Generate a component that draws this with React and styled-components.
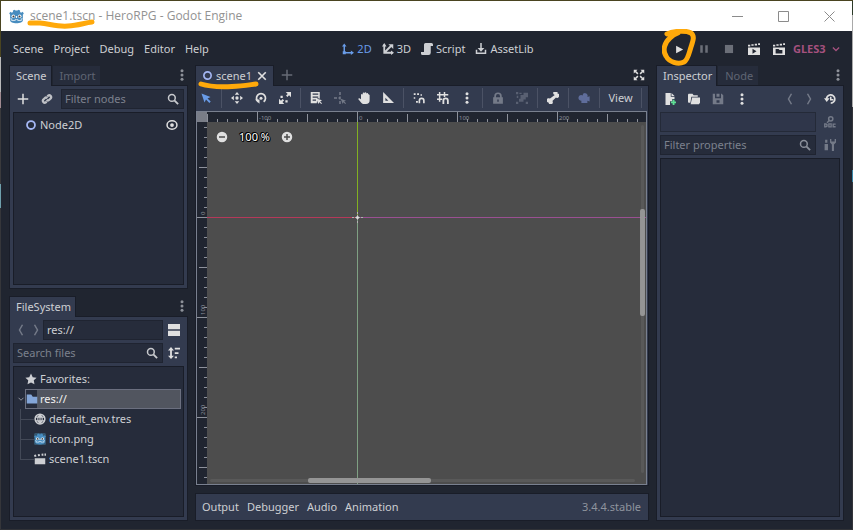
import React, { useEffect, useRef, useState } from "react";
import styled, { createGlobalStyle, css } from "styled-components";

const c = {
  base: "#202530",
  panel: "#333b4f",
  well: "#262c3b",
  edge: "#191d28",
  text: "#cdcfd3",
  dim: "#7d8290",
  faint: "#5f6573",
  icon: "#e0e0e0",
  accent: "#699ce8",
  mark: "#ffa90a",
};

const Global = createGlobalStyle`
  *, *::before, *::after { box-sizing: border-box; }
  body { margin: 0; }
  body, button, input, select {
    font-family: "Noto Sans", "Open Sans", sans-serif;
    font-size: 11px;
    line-height: 16px;
    color: ${c.text};
  }
  button { background: none; border: 0; padding: 0; cursor: pointer; white-space: nowrap; }
  ul { list-style: none; margin: 0; padding: 0; }
  svg { display: block; flex: none; }
`;

const Desktop = styled.div`
  height: 100vh;
  min-height: 400px;
  padding: 1px;
  display: flex;
  background:
    linear-gradient(#4a4420, #4a4420) top / 100% 1px no-repeat,
    linear-gradient(#303237, #303237) bottom / 100% 1px no-repeat,
    linear-gradient(#4a4420 0 57px, #b9b9b9 57px 92px, #a08a90 92px 108px, #3a3a3c 108px 184px, #6fa0ac 184px 208px, #35363a 208px) left / 1px 100% no-repeat,
    linear-gradient(#2c3a28 0 15px, #a9a9a9 15px 107px, #33343a 107px 170px, #3a87a8 170px 182px, #33343a 182px) right / 1px 100% no-repeat;
`;

const Window = styled.div`
  flex: 1;
  min-width: 0;
  display: flex;
  flex-direction: column;
  background: ${c.base};
`;

const TitleBar = styled.header`
  height: 30px;
  flex: none;
  display: flex;
  align-items: center;
  background: #fff;
  padding-left: 8px;
`;
const TitleText = styled.h1`
  position: relative;
  margin: 0 auto 0 6px;
  font-family: "Open Sans", "Noto Sans", sans-serif;
  font-size: 12px;
  font-weight: 400;
  line-height: 16px;
  color: #929292;
  white-space: nowrap;
`;
const CaptionButton = styled.button`
  width: 46px;
  height: 30px;
  display: grid;
  place-items: center;
  color: #8b8b8b;
`;

const Mark = styled.svg`
  position: absolute;
  left: ${(p) => p.$x}px;
  top: ${(p) => p.$y}px;
  z-index: 5;
  fill: none;
  stroke: ${c.mark};
  stroke-width: 5;
  stroke-linecap: round;
  stroke-linejoin: round;
  pointer-events: none;
`;

const MenuBar = styled.nav`
  height: 34px;
  flex: none;
  display: flex;
  justify-content: space-between;
  align-items: center;
  padding: 2px 8px 0 12px;
`;
const Cluster = styled.div`
  display: flex;
  align-items: center;
  gap: ${(p) => p.$gap}px;
`;
const MenuButton = styled.button`
  display: flex;
  align-items: center;
  gap: 3px;
  color: ${(p) => (p.$active ? c.accent : c.text)};
`;
const RunButton = styled.button`
  position: relative;
  width: 24px;
  height: 24px;
  display: grid;
  place-items: center;
  color: ${(p) => (p.$off ? "#6b6f78" : c.icon)};
`;
const DriverField = styled.label`
  display: flex;
  align-items: center;
  gap: 5px;
  color: #a5517e;
  padding: 0 3px 0 1px;
`;
const DriverSelect = styled.select`
  appearance: none;
  border: 0;
  padding: 0;
  background: none;
  color: inherit;
  font-weight: 700;
`;

const Workspace = styled.main`
  flex: 1;
  min-height: 0;
  display: grid;
  grid-template-columns: 179px minmax(0, 1fr) 188px;
  gap: 7px;
  padding: 0 8px 8px;
`;
const LeftColumn = styled.div`
  display: grid;
  grid-template-rows: minmax(0, 224fr) minmax(0, 225fr);
  gap: 7px;
  min-height: 0;
`;
const Dock = styled.section`
  display: flex;
  flex-direction: column;
  min-height: 0;
  min-width: 0;
`;
const TabStrip = styled.div`
  height: 20px;
  flex: none;
  display: flex;
  align-items: flex-start;
  gap: 1px;
`;
const Tab = styled.button`
  position: relative;
  display: flex;
  align-items: center;
  gap: 3px;
  padding: 0 5px 0 7px;
  height: 20px;
  ${(p) =>
    p.$active
      ? css`
          height: 21px;
          z-index: 1;
          background: ${c.panel};
          box-shadow: inset 1px 1px 0 ${c.edge}, inset -1px 0 0 ${c.edge};
        `
      : css`
          height: 19px;
          margin-top: 1px;
          background: ${c.well};
          color: ${c.faint};
        `}
`;
const StripEnd = styled.button`
  margin-left: auto;
  margin-right: ${(p) => (p.$bright ? 4 : 0)}px;
  width: 12px;
  height: 20px;
  display: grid;
  place-items: center;
  color: ${(p) => (p.$bright ? c.icon : "#8d9199")};
`;
const StripAdd = styled(StripEnd)`
  margin-left: 6px;
  color: #666b75;
`;
const DockBody = styled.div`
  flex: 1;
  min-height: 0;
  display: flex;
  flex-direction: column;
  gap: 3px;
  padding: 4px;
  background: ${c.panel};
  box-shadow: inset 0 0 0 1px ${c.edge};
`;
const Row = styled.div`
  display: flex;
  align-items: center;
  height: 20px;
  flex: none;
  gap: ${(p) => p.$gap ?? 4}px;
`;
const IconButton = styled.button`
  width: ${(p) => p.$w ?? 20}px;
  height: 20px;
  display: grid;
  place-items: center;
  color: ${(p) => p.$color ?? (p.$off ? "#747a88" : c.icon)};
  ${(p) => p.$push && "margin-left: auto;"}
`;
const Field = styled.label`
  flex: 1;
  min-width: 0;
  height: 20px;
  display: flex;
  align-items: center;
  padding: 0 4px 0 3px;
  background: ${(p) => (p.$blank ? "#2f364a" : c.well)};
  border: 1px solid ${(p) => (p.$blank ? "#242a38" : "#1f2431")};
  color: ${(p) => (p.$soft ? "#8a8f9a" : "#c8cace")};
`;
const FieldInput = styled.input`
  flex: 1;
  min-width: 0;
  border: 0;
  outline: 0;
  padding: 0;
  background: transparent;
  &::placeholder { color: #7c818d; opacity: 1; }
`;
const Well = styled.ul`
  flex: 1;
  min-height: 0;
  overflow: hidden;
  && { padding: 2px; }
  background: ${c.well};
  border: 1px solid ${c.edge};
`;
const TreeItem = styled.li`
  display: flex;
  align-items: center;
  height: 20px;
  padding-left: ${(p) => p.$indent}px;
`;
const TreeLabel = styled.div`
  flex: 1;
  min-width: 0;
  height: 20px;
  display: flex;
  align-items: center;
  gap: 3px;
  ${(p) =>
    p.$selected &&
    css`
      background: linear-gradient(${c.well}, ${c.well}) left / 11px 100% no-repeat, #51555f;
      border: 1px solid #6b6f7f;
      gap: 2px;
      color: #f0f0f0;
    `}
`;
const Branch = styled.span`
  width: 14px;
  height: 20px;
  background:
    linear-gradient(#434957, #434957) left top / 1px ${(p) => (p.$last ? "50%" : "100%")} no-repeat,
    linear-gradient(#434957, #434957) left center / 100% 1px no-repeat;
`;
const Fold = styled.button`
  width: 9px;
  height: 20px;
  display: grid;
  place-items: center;
  color: #8d919b;
`;

const Centre = styled.div`
  display: flex;
  flex-direction: column;
  min-width: 0;
  min-height: 0;
`;
const EditorPanel = styled.div`
  flex: 1;
  min-height: 0;
  display: flex;
  flex-direction: column;
  background: ${c.panel};
  box-shadow: inset 0 0 0 1px ${c.edge};
  padding: 1px 2px 1px 0;
`;
const Tools = styled.div`
  display: flex;
  align-items: center;
  gap: 2px;
  height: 25px;
  padding-bottom: 1px;
  flex: none;
`;
const Divider = styled.span`
  width: 5px;
  height: 20px;
  background: linear-gradient(#4b5265, #4b5265) center / 1px 100% no-repeat;
`;
const ViewButton = styled.button`
  width: 33px;
  height: 20px;
`;
const Viewport = styled.div`
  flex: 1;
  min-height: 0;
  margin-left: 1px;
  display: grid;
  grid-template: 10px minmax(0, 1fr) / 10px minmax(0, 1fr);
  border: 1px solid #79808f;
  background: ${c.base};
`;
const Corner = styled.div`
  background: #797d87;
`;
const RulerSvg = styled.svg`
  width: 100%;
  height: 100%;
  overflow: hidden;
  text { font-size: 6px; fill: #8d919b; }
  path { stroke: #8d919b; fill: none; }
`;
const Canvas = styled.div`
  position: relative;
  overflow: hidden;
  background: #4d4d4d;
`;
const Axes = styled.svg`
  position: absolute;
  inset: 0;
  width: 100%;
  height: 100%;
`;
const ZoomBar = styled.div`
  position: relative;
  display: flex;
  align-items: center;
  gap: 2px;
  padding: 5px;
`;
const ZoomValue = styled.button`
  width: 41px;
  color: #fff;
  text-shadow: 1px 0 #000, -1px 0 #000, 0 1px #000, 0 -1px #000, 1px 1px #000, -1px -1px #000;
`;
const ScrollH = styled.div`
  position: absolute;
  left: 3px;
  right: 11px;
  bottom: 2px;
  height: 3px;
  border-radius: 2px;
  background: #595959;
`;
const ScrollV = styled.div`
  position: absolute;
  top: 3px;
  bottom: 11px;
  right: 2px;
  width: 3px;
  border-radius: 2px;
  background: #595959;
`;
const ThumbH = styled.div`
  position: absolute;
  top: -1px;
  left: 23%;
  width: 29%;
  height: 5px;
  border-radius: 2px;
  background: #959595;
`;
const ThumbV = styled.div`
  position: absolute;
  left: -1px;
  top: 24%;
  height: 31%;
  width: 5px;
  border-radius: 2px;
  background: rgba(160, 160, 160, 0.85);
`;
const BottomBar = styled.footer`
  height: 28px;
  flex: none;
  margin-top: 7px;
  display: flex;
  align-items: center;
  gap: 8px;
  padding: 0 8px 0 7px;
  background: ${c.panel};
  box-shadow: inset 0 0 0 1px ${c.edge};
`;
const Version = styled.span`
  margin-left: auto;
  color: #8f949e;
`;

/* Icons share a 16-unit grid and take their colour from the control. */
const Icon = ({ size = 12, children }) => (
  <svg width={size} height={size} viewBox="0 0 16 16" fill="currentColor" aria-hidden="true">
    {children}
  </svg>
);
const line = { fill: "none", stroke: "currentColor", strokeWidth: 2 };

const art = {
  dots: <><circle cx="8" cy="2.4" r="2" /><circle cx="8" cy="8" r="2" /><circle cx="8" cy="13.6" r="2" /></>,
  plus: <path {...line} d="M8 1v14M1 8h14" />,
  close: <path {...line} strokeWidth="2.6" d="M2 2l12 12M14 2L2 14" />,
  link: <><path {...line} strokeWidth="3" d="M8.500 4.500l1-1a2.600 2.600 0 0 1 3.600 3.600l-2 2a2.600 2.600 0 0 1-3.600 0M7.500 11.500l-1 1a2.600 2.600 0 0 1-3.600-3.600l2-2a2.600 2.600 0 0 1 3.600 0" /></>,
  search: <><circle {...line} cx="6.500" cy="6.500" r="4.500" /><path {...line} strokeWidth="2.400" d="M9.800 9.800l5 5" /></>,
  node: <circle {...line} strokeWidth="2.400" cx="8" cy="8" r="5.300" />,
  eye: <><ellipse {...line} cx="8" cy="8" rx="6.600" ry="5.600" /><circle cx="8" cy="8" r="2.500" /></>,
  left: <path {...line} d="M10 1L6 8l4 7" />,
  right: <path {...line} d="M6 1l4 7-4 7" />,
  down: <path {...line} d="M3 5.500l5 5 5-5" />,
  split: <path d="M0 0h16v7H0zM0 9h16v7H0z" />,
  sort: <><path d="M4 0l4 4.500H5.200v7H8L4 16l-4-4.500h2.800v-7H0z" /><path d="M9 1h7v2.200H9zM9 7h5v2.200H9zM9 12.800h3V15H9z" /></>,
  star: <path d="M8 .8l2.300 4.700 5.200.7-3.800 3.600.9 5.200L8 12.500 3.400 15l.9-5.200L.5 6.200l5.200-.7z" />,
  folder: <path d="M1 2h6l2 3h6v9H1z" />,
  globe: <><circle {...line} cx="8" cy="8" r="6.500" /><path {...line} strokeWidth="1.500" d="M2 5.500h12M2 10.500h12M8 2v12M8 2C4 5 4 11 8 14M8 2c4 3 4 9 0 12" /></>,
  clapper: <path d="M1 7h14v8H1zM0 2.500l2.500-.6.8 2.700L.8 5.200zM5 1.700l2.500-.4.500 2.700-2.500.4zM10 1l2.400-.2.200 2.700-2.400.2zM14 .8h2v3h-2z" />,
  play: <path d="M2 1.500l12.500 6.500L2 14.500z" />,
  pause: <path d="M2 2h4v12H2zM10 2h4v12h-4z" />,
  stop: <path d="M1.500 1.500h13v13h-13z" />,
  playScene: <><path fillRule="evenodd" d="M0 6h16v10H0zM6 7.800v6.400l5.300-3.200z" /><path d="M0 2.200h3v2.300H0zM4.500 1.500h3v2.300h-3zM9 .9h3v2.300H9zM13.500.4H16v2.300h-2.500z" /></>,
  playCustom: <><path fillRule="evenodd" d="M0 6h16v10H0zM3.500 8v6h9V9.200H8.700L7.500 8z" /><path d="M0 2.200h3v2.300H0zM4.500 1.500h3v2.300h-3zM9 .9h3v2.300H9zM13.500.4H16v2.300h-2.500z" /></>,
  two: <><path {...line} d="M3 3v8.500a1.500 1.500 0 0 0 1.500 1.500H13" /><path d="M0 4.500L3 .5l3 4zM11.800 10l4.200 3-4.200 3zM1 11h4v4H1z" /></>,
  three: <><path {...line} strokeWidth="2.400" d="M3 2v11h11M3 13L12 4" /><path d="M0 4.500L3 0l3 4.500zM12 10l4 3-4 3zM8.500 1.500H15V8z" /></>,
  script: <path d="M6 0h8a2 2 0 0 1 2 2v2h-3v9a3 3 0 0 1-3 3H2a2 2 0 0 1-2-2v-2h4V2a2 2 0 0 1 2-2z" />,
  asset: <><path {...line} d="M2 9v4.500h12V9M8 0v8" /><path d="M3.500 6.500h9L8 11.500z" /></>,
  expand: <><path {...line} d="M3 3l3.500 3.500M13 3L9.500 6.500M3 13l3.500-3.500M13 13L9.500 9.500" /><path d="M1 1h5L1 6zM15 1v5l-5-5zM1 15v-5l5 5zM15 15h-5l5-5z" /></>,
  select: <path d="M2 2l4 12 2-4 4.500 4.500 1.800-1.800L10 8.500l4-2z" />,
  move: <><path d="M8 0l3 3.800H5zM8 16l3-3.800H5zM0 8l3.800-3v6zM16 8l-3.800-3v6z" /><circle cx="8" cy="8" r="2.200" /></>,
  rotate: <><path {...line} strokeWidth="2.300" d="M4.500 13A6 6 0 1 1 11.500 13" /><path d="M0 10h6v5.500z" /><circle cx="8" cy="8.400" r="2" /></>,
  scale: <><path d="M9 0h7v7l-2.600-2.600-2.200 2.200-1.800-1.800 2.200-2.200zM5 9.400L6.800 11.200 4.600 13.400 7 16H0V9l2.600 2.600z" /><path d="M2 5h3v3H2zM8.500 11h3v3h-3z" /></>,
  list: <><path fillRule="evenodd" d="M1 0h12v9l-3-1-1 7H1zM3.500 2v1.500H11V2zM3.500 6v1.500H11V6zM3.500 10v1.500H8V10z" /><path d="M8.500 8.500L16 11l-2.500 1.500L16 15l-1 1-2.500-2.500L11 16z" /></>,
  pivot: <><path {...line} strokeDasharray="4 2" d="M8 0v16M0 8h8" /><path d="M9 9l7 2.500-2.500 1.200L16 15l-1 1-2.500-2.500L11.500 16z" /></>,
  pan: <path d="M4 3.500a1.200 1.200 0 0 1 2.300 0V2a1.200 1.200 0 0 1 2.400 0v-.5a1.200 1.200 0 0 1 2.500 0V2.500a1.200 1.200 0 0 1 2.400 0L15.500 4v7a5 5 0 0 1-5 5H8c-2 0-3.200-1-4.200-2.500L.5 9.800c-.6-1 .8-2 2-1.200L4 9.800z" />,
  ruler: <path fillRule="evenodd" d="M1.500 0L16 14.500H1.500zM4.500 7.500v4h4z" />,
  snap: <><path {...line} strokeWidth="2.200" d="M8.500 15v-3.500a3 3 0 0 1 6 0V15" /><path d="M1 1.500h2.500V4H1zM5.500 1.500H8V4H5.500zM10 3h2v2h-2zM1 7h2v2H1zM4 12h2.500v2.200H4z" /></>,
  grid: <><path {...line} d="M3.500 0v13M10 0v6.500M0 3.500h15M0 9.500h7" /><path {...line} strokeWidth="2.400" d="M8.500 16v-4.500a3 3 0 0 1 6 0V16" /></>,
  lock: <path fillRule="evenodd" d="M3 7V5.500a5 5 0 0 1 10 0V7h1.500v8.500h-13V7zM5.300 7h5.400V5.500a2.700 2.700 0 0 0-5.400 0zM7 10v3h2v-3z" />,
  group: <path fillRule="evenodd" d="M0 0h3v3H0zM4.500 1h3v1.800h-3zM6 4h4V1h6v6h-3v3h-3v3H4V9h2zM13 13h3v3h-3zM0 13h3v3H0zM1 5h2v3H1z" />,
  bone: <path d="M10.300 4A2.900 2.900 0 1 1 14 1.900 2.900 2.900 0 1 1 12 7.200L7.200 12A2.900 2.900 0 1 1 2 14 2.900 2.900 0 1 1 4 8.800z" />,
  camera: <path d="M9.500 1.500a3.500 3.500 0 0 1 3 5l3-1v7l-3-1v3h-8v-3A3.700 3.700 0 1 1 6 4.500a3.500 3.500 0 0 1 3.500-3z" />,
  newRes: <><path d="M2 0h7v5h5v3h-3v3H8v5H2z" /><path d="M10 0l4 4h-4z" /><path fill="#5fdf94" d="M11.500 9H14v2.300h2.300v2.500H14V16h-2.500v-2.200H9.200v-2.500h2.300z" /></>,
  open: <path d="M0 2.500C0 1.600.7 1 1.500 1H6l1.500 2H13v2H4.500L3.200 13H1.500C.7 13 0 12.400 0 11.500zM5.500 6H16v7l-1.500 2h-11z" />,
  save: <path fillRule="evenodd" d="M1 1h3v6h8V1h1l2 2v12H1zM6 9.500V13h4V9.500zM6 1h4v4H6z" />,
  history: <><path {...line} strokeWidth="2.300" d="M3.500 9A5.500 5.500 0 1 1 9 13.500" /><path d="M0 7h7.500L3.700 12z" /><path {...line} d="M9 5v4h3.500" /></>,
  doc: <><circle {...line} cx="9" cy="3.800" r="2.800" /><path {...line} d="M7 6L4 9" /><path {...line} strokeWidth="1.800" d="M1 10.500v4h1.500l1.500-1v-2l-1.500-1zM6.500 10.500h3v4h-3zM15.500 10.800h-3.300v3.500h3.300" /></>,
  tools: <path d="M1.500 1h3v4h-3zM.8 6.500h4.500V15H.8zM8 0v4.500l2.500 2.800V16h2.800V7.300L16 4.500V0h-1.800v3.300h-4.400V0z" />,
  minus: <path fillRule="evenodd" d="M8 1a7 7 0 1 1 0 14A7 7 0 0 1 8 1zM4 7v2h8V7z" />,
  add: <path fillRule="evenodd" d="M8 1a7 7 0 1 1 0 14A7 7 0 0 1 8 1zM7 4v3H4v2h3v3h2V9h3V7H9V4z" />,
};

const Logo = ({ size = 15, tile }) => (
  <svg width={size} height={size} viewBox="0 0 16 16" aria-hidden="true">
    {tile && <rect width="16" height="16" rx="2" fill="#35566f" />}
    <path fill="#478cbf" d="M6 .8l1 .9h2l1-.9 1.800.8v1.500l1.200.8 1.300-1 1.500 1.600-1 1.500V12c0 2-3 3.300-6.800 3.300S1.200 14 1.200 12V6l-1-1.500 1.500-1.600 1.300 1 1.200-.8V1.600z" />
    <path fill="#fff" d="M1.500 9.800l2 .4v1.600h2.700v-1.100h3.600v1.100h2.700v-1.600l2-.4v1l-1 .4v1.500H9v-1.200H7v1.200H2.500v-1.500l-1-.4z" opacity=".7" />
    <circle cx="4.600" cy="7.800" r="1.900" fill="#fff" />
    <circle cx="11.400" cy="7.800" r="1.900" fill="#fff" />
    <circle cx="4.800" cy="7.900" r="1.100" fill="#414042" />
    <circle cx="11.200" cy="7.900" r="1.100" fill="#414042" />
    <path stroke="#fff" strokeWidth="1.200" d="M8 7.500v2" />
  </svg>
);

const ToolIcon = ({ name, label, size, ...rest }) => (
  <IconButton type="button" aria-label={label} {...rest}>
    <Icon size={size}>{art[name]}</Icon>
  </IconButton>
);

const SearchField = ({ label }) => (
  <Field $soft={label === "Filter properties"}>
    <FieldInput type="text" placeholder={label} aria-label={label} />
    <Icon>{art.search}</Icon>
  </Field>
);

const range = (from, to, step) => {
  const out = [];
  for (let v = from; v <= to; v += step) out.push(v);
  return out;
};

const Ruler = ({ origin, vertical }) => {
  const ref = useRef(null);
  const [length, setLength] = useState(0);
  useEffect(() => {
    const measure = () => {
      const box = ref.current.getBoundingClientRect();
      setLength(vertical ? box.height : box.width);
    };
    measure();
    const observer = new ResizeObserver(measure);
    observer.observe(ref.current);
    return () => observer.disconnect();
  }, [vertical]);

  const values = range(-Math.floor(origin / 10) * 10, length - origin, 10);
  const ticks = values.map((v) => {
    const at = origin + v + 0.5;
    const from = v % 100 === 0 ? 0 : v % 50 === 0 ? 2 : 7;
    return vertical ? `M${from} ${at}H10` : `M${at} ${from}V10`;
  });
  return (
    <RulerSvg ref={ref} aria-hidden="true">
      <path d={ticks.join("")} />
      {values
        .filter((v) => v % 100 === 0 && origin + v + 16 < length)
        .map((v) =>
          vertical ? (
            <text key={v} transform={`translate(8 ${origin + v - 2}) rotate(-90)`}>{v}</text>
          ) : (
            <text key={v} x={origin + v + 2} y="8">{v}</text>
          )
        )}
    </RulerSvg>
  );
};

const toolGroups = [
  [["select", "Select Mode", { $color: c.accent }]],
  [["move", "Move Mode"], ["rotate", "Rotate Mode"], ["scale", "Scale Mode"]],
  [["list", "List Selection"], ["pivot", "Pivot", { $off: true }], ["pan", "Pan Mode"], ["ruler", "Ruler Mode"]],
  [["snap", "Smart Snap"], ["grid", "Grid Snap"], ["dots", "Snapping Options"]],
  [["lock", "Lock", { $off: true }], ["group", "Group", { $off: true, $color: "#596072" }]],
  [["bone", "Skeleton Options"]],
  [["camera", "Override Camera", { $color: "#5f6d9b" }]],
];

const files = [
  ["default_env.tres", <Icon key="i">{art.globe}</Icon>],
  ["icon.png", <Logo key="i" size={12} tile />],
  ["scene1.tscn", <Icon key="i">{art.clapper}</Icon>],
];

export default function App() {
  return (
    <Desktop>
      <Global />
      <Window>
        <TitleBar>
          <Logo />
          <TitleText>
            scene1.tscn - HeroRPG - Godot Engine
            <Mark $x={-4} $y={11} width="70" height="10" viewBox="0 0 70 10">
              <path d="M4 4h10c10 1 18 4 28 3c10-.5 16-3 24-4" />
            </Mark>
          </TitleText>
          <CaptionButton type="button" aria-label="Minimize">
            <svg width="11" height="11"><path d="M0 5.500h11" stroke="currentColor" /></svg>
          </CaptionButton>
          <CaptionButton type="button" aria-label="Maximize">
            <svg width="11" height="11"><path d="M.5.5h10v10H.5z" stroke="currentColor" fill="none" /></svg>
          </CaptionButton>
          <CaptionButton type="button" aria-label="Close">
            <svg width="11" height="11"><path d="M.5.5l10 10M10.500.5l-10 10" stroke="currentColor" /></svg>
          </CaptionButton>
        </TitleBar>

        <MenuBar>
          <Cluster $gap={10}>
            {["Scene", "Project", "Debug", "Editor", "Help"].map((m) => (
              <MenuButton type="button" key={m}>{m}</MenuButton>
            ))}
          </Cluster>
          <Cluster $gap={10}>
            <MenuButton type="button" $active><Icon>{art.two}</Icon>2D</MenuButton>
            <MenuButton type="button"><Icon>{art.three}</Icon>3D</MenuButton>
            <MenuButton type="button"><Icon>{art.script}</Icon>Script</MenuButton>
            <MenuButton type="button"><Icon>{art.asset}</Icon>AssetLib</MenuButton>
          </Cluster>
          <Cluster $gap={1}>
            <RunButton type="button" aria-label="Play">
              <Icon size={9}>{art.play}</Icon>
              <Mark $x={-5} $y={-8} width="36" height="38" viewBox="0 0 36 38">
                <path d="M5 5C11 2 24 1 29 4C33 7 31 12 29 18C27 24 26 31 22 33C16 36 7 33 4 27C0 21 3 13 8 9C11 6 13 5 16 4" />
              </Mark>
            </RunButton>
            <RunButton type="button" aria-label="Pause" $off><Icon size={10}>{art.pause}</Icon></RunButton>
            <RunButton type="button" aria-label="Stop" $off><Icon size={10}>{art.stop}</Icon></RunButton>
            <RunButton type="button" aria-label="Play Scene"><Icon>{art.playScene}</Icon></RunButton>
            <RunButton type="button" aria-label="Play Custom Scene"><Icon>{art.playCustom}</Icon></RunButton>
            <DriverField>
              <DriverSelect aria-label="Video driver" defaultValue="GLES3">
                <option>GLES3</option>
              </DriverSelect>
              <Icon size={10}>{art.down}</Icon>
            </DriverField>
          </Cluster>
        </MenuBar>

        <Workspace>
          <LeftColumn>
            <Dock>
              <TabStrip>
                <Tab type="button" $active>Scene</Tab>
                <Tab type="button">Import</Tab>
                <StripEnd type="button" aria-label="Scene dock options"><Icon>{art.dots}</Icon></StripEnd>
              </TabStrip>
              <DockBody>
                <Row $gap={2}>
                  <ToolIcon name="plus" label="Add node" />
                  <ToolIcon name="link" label="Instance scene" $w={24} $color="#bfc1c6" />
                  <SearchField label="Filter nodes" />
                </Row>
                <Well>
                  <TreeItem $indent={9}>
                    <TreeLabel>
                      <IconButton as="span" $w={12} $color="#a5b7f3"><Icon>{art.node}</Icon></IconButton>
                      Node2D
                    </TreeLabel>
                    <ToolIcon name="eye" label="Toggle visibility" $w={18} />
                  </TreeItem>
                </Well>
              </DockBody>
            </Dock>
            <Dock>
              <TabStrip>
                <Tab type="button" $active>FileSystem</Tab>
                <StripEnd type="button" aria-label="FileSystem dock options"><Icon>{art.dots}</Icon></StripEnd>
              </TabStrip>
              <DockBody>
                <Row $gap={0}>
                  <ToolIcon name="left" label="Back" $w={15} $off />
                  <ToolIcon name="right" label="Forward" $w={15} $off />
                  <Field>
                    <FieldInput type="text" defaultValue="res://" aria-label="Path" />
                  </Field>
                  <ToolIcon name="split" label="Toggle split mode" $w={21} />
                </Row>
                <Row $gap={0}>
                  <SearchField label="Search files" />
                  <ToolIcon name="sort" label="Sort files" $w={21} />
                </Row>
                <Well>
                  <TreeItem $indent={9}>
                    <TreeLabel><Icon>{art.star}</Icon>Favorites:</TreeLabel>
                  </TreeItem>
                  <TreeItem $indent={0}>
                    <Fold type="button" aria-label="Collapse res://"><Icon size={8}>{art.down}</Icon></Fold>
                    <TreeLabel $selected>
                      <IconButton as="span" $w={12} $color="#84a6d8"><Icon>{art.folder}</Icon></IconButton>
                      res://
                    </TreeLabel>
                  </TreeItem>
                  {files.map(([name, icon], i) => (
                    <TreeItem key={name} $indent={4}>
                      <Branch $last={i === files.length - 1} />
                      <TreeLabel>{icon}{name}</TreeLabel>
                    </TreeItem>
                  ))}
                </Well>
              </DockBody>
            </Dock>
          </LeftColumn>

          <Centre>
            <TabStrip>
              <Tab type="button" $active>
                <IconButton as="span" $w={11} $color="#a5b7f3"><Icon size={11}>{art.node}</Icon></IconButton>
                scene1
                <IconButton as="span" $w={14}><Icon size={10}>{art.close}</Icon></IconButton>
                <Mark $x={3} $y={14} width="62" height="12" viewBox="0 0 62 12">
                  <path d="M3 5C12 8 22 8 34 7.500C44 7 50 6 58 5" />
                </Mark>
              </Tab>
              <StripAdd type="button" aria-label="Add scene"><Icon>{art.plus}</Icon></StripAdd>
              <StripEnd type="button" aria-label="Distraction free mode" $bright><Icon>{art.expand}</Icon></StripEnd>
            </TabStrip>
            <EditorPanel>
              <Tools>
                {toolGroups.map((group, g) => (
                  <React.Fragment key={g}>
                    {group.map(([name, label, look]) => (
                      <ToolIcon key={name} name={name} label={label} $w={22} {...look} />
                    ))}
                    <Divider />
                  </React.Fragment>
                ))}
                <ViewButton type="button">View</ViewButton>
                <Divider />
              </Tools>
              <Viewport>
                <Corner />
                <Ruler origin={150} />
                <Ruler origin={95} vertical />
                <Canvas>
                  <Axes aria-hidden="true">
                    <path d="M150.500 0V95" stroke="#82b022" />
                    <path d="M150.500 95V2400" stroke="#7fa083" />
                    <path d="M0 95.500H150" stroke="#b5395a" />
                    <path d="M150 95.500H2400" stroke="#9a5092" />
                    <path d="M150.500 90v11M145 95.500h11" stroke="#b4b4b4" strokeWidth="1" strokeDasharray="2 1" />
                    <circle cx="150.500" cy="95.500" r="1.500" fill="#ddd" />
                  </Axes>
                  <ZoomBar>
                    <ToolIcon name="minus" label="Zoom out" />
                    <ZoomValue type="button">100 %</ZoomValue>
                    <ToolIcon name="add" label="Zoom in" />
                  </ZoomBar>
                  <ScrollH><ThumbH /></ScrollH>
                  <ScrollV><ThumbV /></ScrollV>
                </Canvas>
              </Viewport>
            </EditorPanel>
            <BottomBar>
              {["Output", "Debugger", "Audio", "Animation"].map((m) => (
                <MenuButton type="button" key={m}>{m}</MenuButton>
              ))}
              <Version>3.4.4.stable</Version>
            </BottomBar>
          </Centre>

          <Dock>
            <TabStrip>
              <Tab type="button" $active>Inspector</Tab>
              <Tab type="button">Node</Tab>
              <StripEnd type="button" aria-label="Inspector dock options"><Icon>{art.dots}</Icon></StripEnd>
            </TabStrip>
            <DockBody>
              <Row>
                <ToolIcon name="newRes" label="New resource" />
                <ToolIcon name="open" label="Load resource" />
                <ToolIcon name="save" label="Save resource" $off />
                <ToolIcon name="dots" label="Resource options" />
                <ToolIcon name="left" label="Previous object" $w={15} $off $push />
                <ToolIcon name="right" label="Next object" $w={15} $off />
                <ToolIcon name="history" label="Object history" />
              </Row>
              <Row>
                <Field $blank />
                <ToolIcon name="doc" label="Open documentation" $off />
              </Row>
              <Row>
                <SearchField label="Filter properties" />
                <ToolIcon name="tools" label="Object properties" $off />
              </Row>
              <Well />
            </DockBody>
          </Dock>
        </Workspace>
      </Window>
    </Desktop>
  );
}
